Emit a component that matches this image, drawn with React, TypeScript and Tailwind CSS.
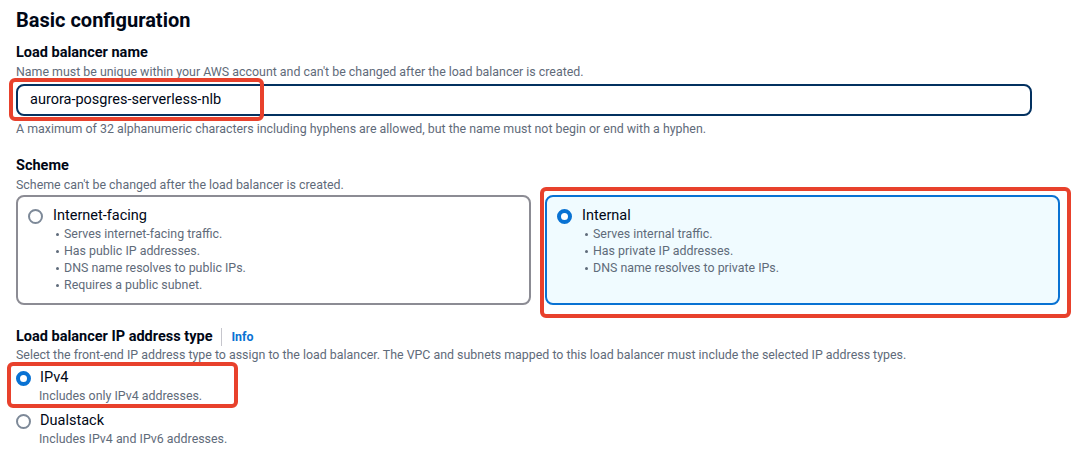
import React from "react";

const font = { fontFamily: "Roboto, 'Open Sans', Arial, sans-serif" };

function Radio({ checked }: { checked: boolean }) {
  return checked ? (
    <span className="w-[15px] h-[15px] rounded-full border-[4px] border-[#0972d3] bg-white shrink-0 box-border" />
  ) : (
    <span className="w-[15px] h-[15px] rounded-full border-2 border-[#7d8998] bg-white shrink-0 box-border" />
  );
}

function SchemeCard({
  label,
  items,
  selected,
}: {
  label: string;
  items: string[];
  selected: boolean;
}) {
  return (
    <div
      className={`relative flex-1 h-[110px] rounded-lg border-2 pl-[10px] pt-[10px] ${
        selected ? "border-[#0972d3] bg-[#f0fbff]" : "border-[#8c8c94] bg-white"
      }`}
    >
      <div className="flex items-center gap-[10px] h-[18px]">
        <Radio checked={selected} />
        <span className="text-[14.5px] text-[#000716]">{label}</span>
      </div>
      <ul className="mt-[1px] pl-[28px]">
        {items.map((it) => (
          <li key={it} className="flex items-center h-[17px] text-[12.4px] text-[#5f6b7a]">
            <span className="w-[3px] h-[3px] rounded-full bg-[#5f6b7a] mr-[5px]" />
            {it}
          </li>
        ))}
      </ul>
      {selected && (
        <div className="absolute left-[-7px] top-[-10px] right-[-13px] bottom-[-15px] border-[4px] border-[#e8412c] rounded-[6px] pointer-events-none" />
      )}
    </div>
  );
}

export default function App() {
  return (
    <div className="w-[1081px] h-[460px] bg-white overflow-hidden pl-4 pr-[49px] pt-[8px]" style={font}>
      {/* Title */}
      <h2 className="text-[20px] leading-[24px] font-bold text-[#000716]">Basic configuration</h2>

      {/* Name */}
      <div className="mt-[12px] text-[14.5px] leading-[18px] font-bold text-[#000716]">Load balancer name</div>
      <div className="text-[12.4px] leading-[16px] text-[#5f6b7a] mt-[2px]">
        Name must be unique within your AWS account and can't be changed after the load balancer is created.
      </div>
      <div className="relative mt-[4px]">
        <div className="h-[32px] rounded-lg border-2 border-[#033160] flex items-center pl-[12px] text-[14.5px] text-[#000716]">
          aurora-posgres-serverless-nlb
        </div>
        <div className="absolute left-[-7px] top-[-6px] w-[255px] h-[43px] border-[4px] border-[#e8412c] rounded-[6px]" />
      </div>
      <div className="mt-[5px] text-[12.4px] leading-[16px] text-[#5f6b7a]">
        A maximum of 32 alphanumeric characters including hyphens are allowed, but the name must not begin or end with a hyphen.
      </div>

      {/* Scheme */}
      <div className="mt-[20px] text-[14.5px] leading-[18px] font-bold text-[#000716]">Scheme</div>
      <div className="text-[12.4px] leading-[16px] text-[#5f6b7a] mt-[2px]">
        Scheme can't be changed after the load balancer is created.
      </div>
      <div className="flex gap-[14px] mt-[2px] w-[1044px]">
        <SchemeCard
          label="Internet-facing"
          selected={false}
          items={[
            "Serves internet-facing traffic.",
            "Has public IP addresses.",
            "DNS name resolves to public IPs.",
            "Requires a public subnet.",
          ]}
        />
        <SchemeCard
          label="Internal"
          selected={true}
          items={["Serves internal traffic.", "Has private IP addresses.", "DNS name resolves to private IPs."]}
        />
      </div>

      {/* IP address type */}
      <div className="mt-[23px] flex items-center h-[18px]">
        <span className="text-[14.5px] font-bold text-[#000716]">Load balancer IP address type</span>
        <span className="mx-[9px] w-px h-[18px] bg-[#c6c6cd]" />
        <span className="text-[12.4px] font-bold text-[#0972d3]">Info</span>
      </div>
      <div className="text-[12.4px] leading-[16px] text-[#5f6b7a] mt-[1px]">
        Select the front-end IP address type to assign to the load balancer. The VPC and subnets mapped to this load balancer must include the selected IP address types.
      </div>
      <div className="relative mt-[6px]">
        <div className="flex items-center gap-[9px] h-[18px]">
          <Radio checked={true} />
          <span className="text-[14.5px] text-[#000716]">IPv4</span>
        </div>
        <div className="pl-[23px] text-[12.4px] leading-[17px] text-[#5f6b7a]">Includes only IPv4 addresses.</div>
        <div className="absolute left-[-9px] top-[-7px] w-[231px] h-[46px] border-[4px] border-[#e8412c] rounded-[6px]" />
      </div>
      <div className="mt-[8px]">
        <div className="flex items-center gap-[9px] h-[18px]">
          <Radio checked={false} />
          <span className="text-[14.5px] text-[#000716]">Dualstack</span>
        </div>
        <div className="pl-[23px] text-[12.4px] leading-[17px] text-[#5f6b7a]">Includes IPv4 and IPv6 addresses.</div>
      </div>
    </div>
  );
}
